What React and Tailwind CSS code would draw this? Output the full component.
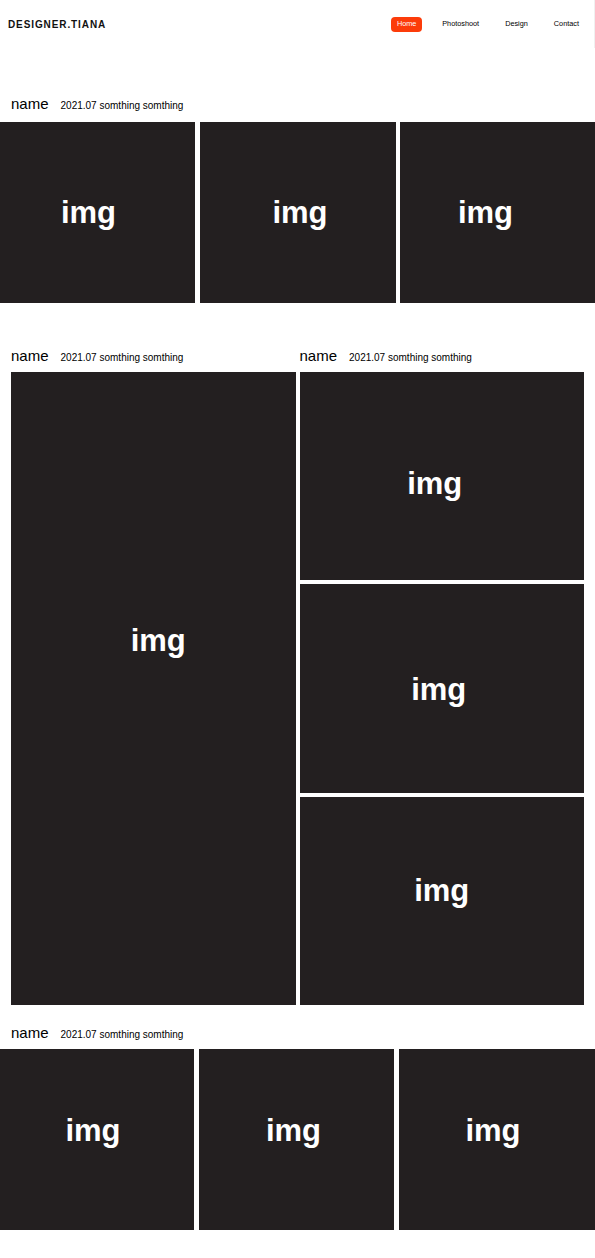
import React from "react";

const font = { fontFamily: '"Liberation Sans", Arial, sans-serif' };

function Box({ className, offset }) {
  return (
    <div className={`bg-[#231f20] flex items-center justify-center ${className}`}>
      <span className={`text-white font-bold text-[31px] leading-none ${offset}`}>img</span>
    </div>
  );
}

function Heading() {
  return (
    <div className="flex items-baseline h-[20px] leading-[20px]">
      <span className="text-[15px] text-black">name</span>
      <span className="text-[10px] text-black ml-[12px]">2021.07 somthing somthing</span>
    </div>
  );
}

export default function App() {
  return (
    <div className="w-[595px] min-h-[1258px] bg-white overflow-hidden" style={font}>
      <header className="h-[48px] flex items-center justify-between border-r border-r-[#f0f0f0]">
        <div className="ml-[8px] text-[10px] font-bold tracking-[0.9px] text-[#111]">DESIGNER.TIANA</div>
        <nav className="flex items-center mr-[15px] text-[7.3px] text-black">
          <span className="bg-[#fc3c0a] text-white rounded-[4px] w-[31px] h-[15px] flex items-center justify-center">Home</span>
          <span className="ml-[20px]">Photoshoot</span>
          <span className="ml-[26px]">Design</span>
          <span className="ml-[26px]">Contact</span>
        </nav>
      </header>

      <section className="mt-[46px]">
        <div className="pl-[11px]">
          <Heading />
        </div>
        <div className="flex mt-[8px]">
          <Box className="w-[195px] h-[181px]" offset="-translate-x-[9px]" />
          <Box className="w-[196px] h-[181px] ml-[5px]" offset="translate-x-[2px]" />
          <Box className="w-[195px] h-[181px] ml-[4px]" offset="-translate-x-[12px]" />
        </div>
      </section>

      <section className="mt-[43px] px-[11px] flex gap-[4px]">
        <div className="w-[285px] flex flex-col">
          <Heading />
          <Box className="mt-[6px] h-[633px]" offset="translate-x-[5px] -translate-y-[48px]" />
        </div>
        <div className="w-[285px] flex flex-col">
          <Heading />
          <div className="mt-[6px] flex flex-col gap-[4px]">
            <Box className="h-[208px]" offset="-translate-x-[7px] translate-y-[7px]" />
            <Box className="h-[209px]" offset="-translate-x-[3px] translate-y-[1px]" />
            <Box className="h-[208px]" offset="-translate-y-[11px]" />
          </div>
        </div>
      </section>

      <section className="mt-[18px]">
        <div className="pl-[11px]">
          <Heading />
        </div>
        <div className="flex mt-[6px]">
          <Box className="w-[194px] h-[181px]" offset="-translate-x-[4px] -translate-y-[9px]" />
          <Box className="w-[195px] h-[181px] ml-[5px]" offset="-translate-x-[3px] -translate-y-[9px]" />
          <Box className="w-[196px] h-[181px] ml-[5px]" offset="-translate-x-[4px] -translate-y-[9px]" />
        </div>
      </section>
    </div>
  );
}
